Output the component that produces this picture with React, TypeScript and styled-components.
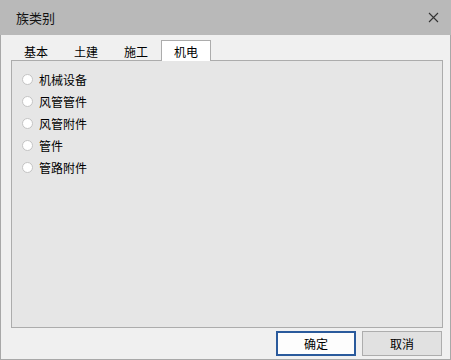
import React, { useState } from 'react';
import styled, { createGlobalStyle } from 'styled-components';

const GlobalStyle = createGlobalStyle`
  html, body {
    margin: 0;
    padding: 0;
    background: #f0f0f0;
  }
  body {
    font-family: "Noto Sans CJK SC", "Microsoft YaHei", sans-serif;
    font-size: 12px;
    color: #000;
  }
`;

const StyledWindow = styled.div`
  width: 451px;
  height: 360px;
  display: flex;
  flex-direction: column;
  box-sizing: border-box;
  background: #f0f0f0;
`;

const StyledTitleBar = styled.div`
  height: 35px;
  flex: none;
  display: flex;
  align-items: center;
  justify-content: space-between;
  padding: 0 12px 0 16px;
  background: #b9b9b9;
  font-size: 13px;
  color: #111;
`;

const StyledCloseButton = styled.button`
  width: 12px;
  height: 12px;
  padding: 0;
  border: none;
  background: transparent;
  display: flex;
  align-items: center;
  justify-content: center;
  cursor: pointer;
`;

const StyledBody = styled.div`
  flex: 1;
  display: flex;
  flex-direction: column;
  padding: 5px 7px 3px 9px;
  border: 1px solid #a8a8a8;
  border-top: none;
`;

const StyledTabBar = styled.div`
  display: flex;
  height: 20px;
  padding-left: 1px;
`;

const StyledTab = styled.div<{ $active: boolean }>`
  width: 50px;
  box-sizing: border-box;
  display: flex;
  align-items: center;
  justify-content: center;
  line-height: 1;
  padding-top: 2px;
  position: relative;
  z-index: 1;
  height: ${({ $active }) => ($active ? '21px' : '20px')};
  background: ${({ $active }) => ($active ? '#ffffff' : 'transparent')};
  border: 1px solid ${({ $active }) => ($active ? '#acacac' : 'transparent')};
  border-bottom: none;
  cursor: default;
`;

const StyledPanel = styled.div`
  height: 268px;
  box-sizing: border-box;
  margin-left: 1px;
  background: #e6e6e6;
  border: 1px solid #acacac;
  padding: 7px 10px;
  display: flex;
  flex-direction: column;
`;

const StyledOption = styled.label`
  height: 22px;
  display: flex;
  align-items: center;
  gap: 6px;
  cursor: default;
`;

const StyledRadio = styled.span<{ $checked: boolean }>`
  width: 11px;
  height: 11px;
  box-sizing: border-box;
  border-radius: 50%;
  border: 1px solid #c4c4c4;
  background: ${({ $checked }) =>
    $checked ? 'radial-gradient(circle, #333 0 2.5px, #fff 3px)' : '#ffffff'};
`;

const StyledFooter = styled.div`
  display: flex;
  justify-content: flex-end;
  gap: 6px;
  margin-top: 3px;
  padding-right: 1px;
`;

const StyledButton = styled.button<{ $primary?: boolean }>`
  width: 80px;
  height: 25px;
  box-sizing: border-box;
  font-family: inherit;
  font-size: 12px;
  color: #000;
  background: ${({ $primary }) => ($primary ? '#fdfdfd' : '#e1e1e1')};
  border: ${({ $primary }) => ($primary ? '2px solid #2a5a9c' : '1px solid #adadad')};
  padding: 0;
  cursor: default;
`;

const tabs = ['基本', '土建', '施工', '机电'];
const options = ['机械设备', '风管管件', '风管附件', '管件', '管路附件'];

const App = () => {
  const [activeTab, setActiveTab] = useState(3);
  const [selected, setSelected] = useState<number | null>(null);

  return (
    <StyledWindow>
      <GlobalStyle />
      <StyledTitleBar>
        <span>族类别</span>
        <StyledCloseButton aria-label='关闭'>
          <svg width='11' height='11' viewBox='0 0 11 11'>
            <path d='M1 1 L10 10 M10 1 L1 10' stroke='#333' strokeWidth='1.1' />
          </svg>
        </StyledCloseButton>
      </StyledTitleBar>
      <StyledBody>
        <StyledTabBar>
          {tabs.map((tab, i) => (
            <StyledTab key={tab} $active={i === activeTab} onClick={() => setActiveTab(i)}>
              {tab}
            </StyledTab>
          ))}
        </StyledTabBar>
        <StyledPanel>
          {options.map((option, i) => (
            <StyledOption key={option} onClick={() => setSelected(i)}>
              <StyledRadio $checked={selected === i} />
              {option}
            </StyledOption>
          ))}
        </StyledPanel>
        <StyledFooter>
          <StyledButton $primary>确定</StyledButton>
          <StyledButton>取消</StyledButton>
        </StyledFooter>
      </StyledBody>
    </StyledWindow>
  );
};

export default App;
